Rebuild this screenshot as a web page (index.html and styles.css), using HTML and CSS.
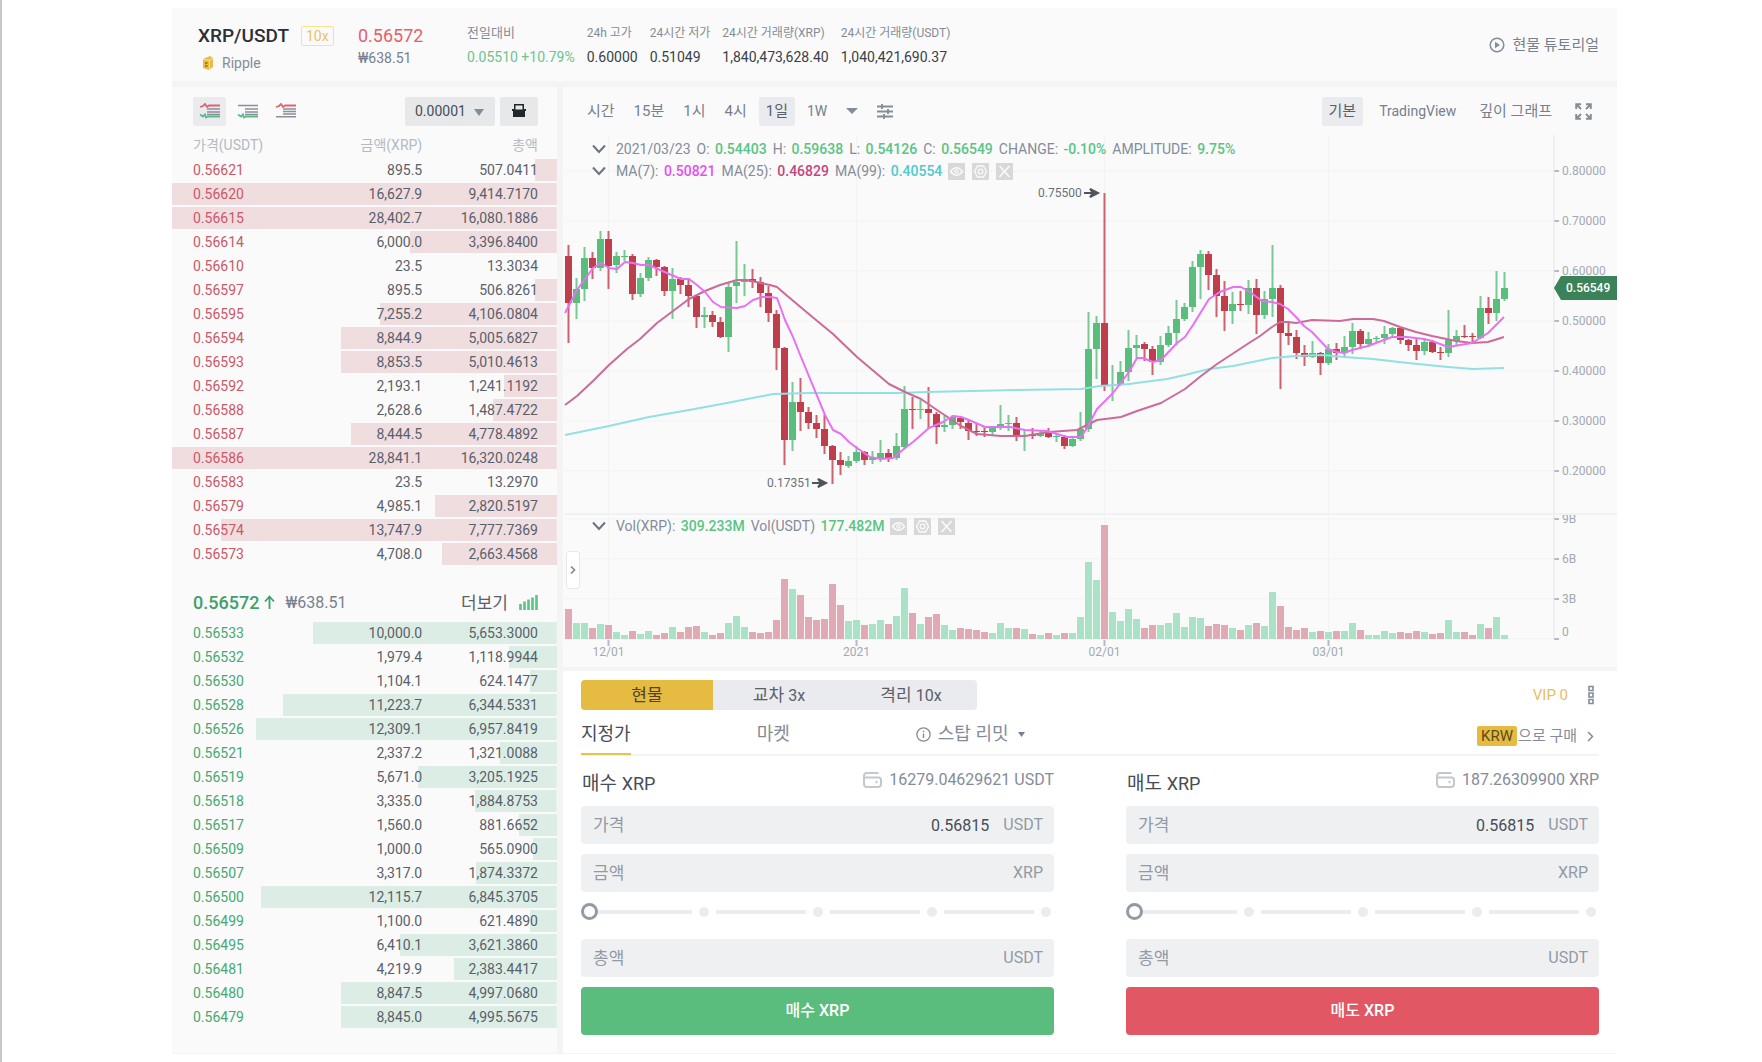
FILE: index.html
```html
<!DOCTYPE html>
<html lang="ko">
<head>
  <meta charset="UTF-8">
  <meta name="viewport" content="width=device-width">
  <title>XRP/USDT</title>
  <link rel="stylesheet" href="styles.css">
</head>

<body>

<svg class="defs" aria-hidden="true">
  <symbol id="chev" viewBox="0 0 14 10"><path d="M1 1.5l6 6.5 6-6.5" fill="none" stroke="#6b7380" stroke-width="2"/></symbol>
  <symbol id="eye" viewBox="0 0 17 17"><rect width="17" height="17" fill="#d8d8d8"/><path d="M2.500 8.500q6-7.500 12 0q-6 7.500-12 0z" fill="none" stroke="#fafafa" stroke-width="1.400"/><circle cx="8.500" cy="8.500" r="1.600" fill="none" stroke="#fafafa" stroke-width="1.200"/></symbol>
  <symbol id="gear" viewBox="0 0 17 17"><rect width="17" height="17" fill="#d8d8d8"/><path d="M5.500 3h6l3 5.500-3 5.500h-6l-3-5.500z" fill="none" stroke="#fafafa" stroke-width="1.400"/><circle cx="8.500" cy="8.500" r="2.300" fill="none" stroke="#fafafa" stroke-width="1.300"/></symbol>
  <symbol id="cross" viewBox="0 0 17 17"><rect width="17" height="17" fill="#d8d8d8"/><path d="M3.500 3l10 11M13.500 3l-10 11" stroke="#fafafa" stroke-width="1.700"/></symbol>
  <symbol id="wallet" viewBox="0 0 19 16"><path d="M15.500 1H4Q1 1 1 4v8q0 3 3 3h11q3 0 3-3V8q0-2.500-2.500-2.500H1" fill="none" stroke="#c3c8cf" stroke-width="2"/><circle cx="13.500" cy="10" r="1.200" fill="#c3c8cf"/></symbol>
</svg>

<main class="terminal">

  <header class="ticker">
    <div class="pair">
      <div class="pair-top"><h1>XRP/USDT</h1><span class="lever">10x</span></div>
      <div class="coin">
        <svg width="12" height="14" viewBox="0 0 12 14"><path d="M1 3l7-3 3 2v9l-4 3-6-2z" fill="#e8bb45"/><path d="M7.500 4v9.500M1.500 3.500l6 .8 3.500-2" stroke="#f8e3a5" fill="none"/><path d="M3 6h2.500v2H3zM3 9h2.500v2H3z" fill="#a87d1c"/></svg>
        <a href="#ripple">Ripple</a>
      </div>
    </div>
    <div class="last">
      <div class="last-price">0.56572</div>
      <div class="last-krw">₩638.51</div>
    </div>
    <dl class="stats">
      <div><dt class="big">전일대비</dt><dd class="up">0.05510 +10.79%</dd></div>
      <div><dt>24h 고가</dt><dd>0.60000</dd></div>
      <div><dt>24시간 저가</dt><dd>0.51049</dd></div>
      <div><dt>24시간 거래량(XRP)</dt><dd>1,840,473,628.40</dd></div>
      <div><dt>24시간 거래량(USDT)</dt><dd>1,040,421,690.37</dd></div>
    </dl>
    <a class="tutorial" href="#tutorial">
      <svg width="16" height="16" viewBox="0 0 16 16"><circle cx="8" cy="8" r="6.800" fill="none" stroke="#848c99" stroke-width="1.500"/><path d="M6 4.800l5 3.200-5 3.200z" fill="#848c99"/></svg>
      현물 튜토리얼
    </a>
  </header>

  <section class="book">
    <div class="book-tools">
      <button class="view active" aria-label="전체">
        <svg width="22" height="16" viewBox="0 0 22 16"><path d="M8 6h13M8 9h13M8 11.500h13" stroke="#8b8f96" stroke-width="1.500"/><path d="M1 4l3-1 2-2 2 3 2-1.500h11" stroke="#e06470" stroke-width="1.800" fill="none"/><path d="M1 11.500l3 2 2-2 1 3 2-1h12" stroke="#59bd8a" stroke-width="1.800" fill="none"/></svg>
      </button>
      <button class="view" aria-label="매수">
        <svg width="22" height="16" viewBox="0 0 22 16"><path d="M1 2.500h20M8 6h13M8 9h13M8 11.500h13" stroke="#8b8f96" stroke-width="1.500"/><path d="M1 11.500l3 2 2-2 1 3 2-1h12" stroke="#59bd8a" stroke-width="1.800" fill="none"/></svg>
      </button>
      <button class="view" aria-label="매도">
        <svg width="22" height="16" viewBox="0 0 22 16"><path d="M8 6h13M8 8.500h13M8 11h13M1 13.700h20" stroke="#8b8f96" stroke-width="1.500"/><path d="M1 4l3-1 2-2 2 3 2-1.500h11" stroke="#e06470" stroke-width="1.800" fill="none"/></svg>
      </button>
      <span class="step"><select aria-label="단위"><option>0.00001</option></select></span>
      <button class="tray" aria-label="인쇄">
        <svg width="14" height="14" viewBox="0 0 14 14"><path d="M2 0h10v5h2v2h-1v6H1V7H0V5h2z" fill="#23262b"/><path d="M3.500 1.500h7v4h-7z" fill="#e6e8ea"/></svg>
      </button>
    </div>
    <table class="orders asks">
      <thead><tr><th>가격(USDT)</th><th>금액(XRP)</th><th>총액</th></tr></thead>
      <tbody id="asks"></tbody>
    </table>
    <div class="spread">
      <strong>0.56572</strong>
      <svg width="11" height="15" viewBox="0 0 11 15"><path d="M5.500 14V2M1 6.500l4.500-5 4.500 5" fill="none" stroke="#3fa06c" stroke-width="1.800"/></svg>
      <span class="spread-krw">₩638.51</span>
      <a href="#more">더보기</a>
      <svg width="19" height="15" viewBox="0 0 19 15"><path d="M1.500 15V9M5.500 15V6.500M9.500 15V4.500M13.500 15V2.500M17.500 15V0" stroke="#5bc487" stroke-width="2.600"/></svg>
    </div>
    <table class="orders bids">
      <tbody id="bids"></tbody>
    </table>
  </section>

  <section class="chart">
    <div class="chart-tools">
      <div class="tools">
        <button>시간</button>
        <button>15분</button>
        <button>1시</button>
        <button>4시</button>
        <button class="active">1일</button>
        <button class="latin">1W</button>
        <button aria-label="더 많은 간격"><svg width="12" height="6" viewBox="0 0 12 6"><path d="M0 0h12L6 6z" fill="#848c99"/></svg></button>
        <button aria-label="지표"><svg width="16" height="15" viewBox="0 0 16 15"><path d="M0 2.500h16M0 7.500h16M0 12.500h16M5 0v5M11 5v5M7 10v5" stroke="#848c99" stroke-width="1.800"/></svg></button>
      </div>
      <div class="tools wide">
        <button class="active">기본</button>
        <button class="latin">TradingView</button>
        <button>깊이 그래프</button>
        <button aria-label="전체 화면"><svg width="17" height="17" viewBox="0 0 17 17"><path d="M1.200 6V1.200H6M1.500 1.500L6 6M11 1.200h4.800V6M15.500 1.500L11 6M1.200 11v4.800H6M1.500 15.500L6 11M11 15.800h4.800V11M15.500 15.500L11 11" fill="none" stroke="#848c99" stroke-width="1.900"/></svg></button>
      </div>
    </div>
    <div class="plot">
      <svg id="candles" viewBox="0 0 1054 532" role="img" aria-label="XRP/USDT 1일"></svg>
      <div class="legends">
        <p class="legend"><svg width="14" height="10"><use href="#chev"/></svg><span>2021/03/23</span><span>O: <b>0.54403</b></span><span>H: <b>0.59638</b></span><span>L: <b>0.54126</b></span><span>C: <b>0.56549</b></span><span>CHANGE: <b>-0.10%</b></span><span>AMPLITUDE: <b>9.75%</b></span></p>
        <p class="legend"><svg width="14" height="10"><use href="#chev"/></svg><span>MA(7): <b class="ma7">0.50821</b></span><span>MA(25): <b class="ma25">0.46829</b></span><span>MA(99): <b class="ma99">0.40554</b></span><svg class="tool" width="17" height="17"><use href="#eye"/></svg><svg class="tool" width="17" height="17"><use href="#gear"/></svg><svg class="tool" width="17" height="17"><use href="#cross"/></svg></p>
      </div>
      <div class="legends volume">
        <p class="legend"><svg width="14" height="10"><use href="#chev"/></svg><span>Vol(XRP): <b>309.233M</b></span><span>Vol(USDT) <b>177.482M</b></span><svg class="tool" width="17" height="17"><use href="#eye"/></svg><svg class="tool" width="17" height="17"><use href="#gear"/></svg><svg class="tool" width="17" height="17"><use href="#cross"/></svg></p>
      </div>
      <button class="handle" aria-label="펼치기"><svg width="6" height="8" viewBox="0 0 6 8"><path d="M1 .5L4.500 4 1 7.500" fill="none" stroke="#848c99" stroke-width="1.700"/></svg></button>
    </div>
  </section>

  <section class="trade">
    <div class="trade-top">
      <div class="modes">
        <button class="active">현물</button>
        <button>교차 <small>3x</small></button>
        <button>격리 <small>10x</small></button>
      </div>
      <a class="vip" href="#vip">VIP 0</a>
      <button class="dots" aria-label="메뉴"><svg width="6" height="20" viewBox="0 0 6 20"><path d="M1 1.500h4v4H1zM1 8h4v4H1zM1 14.500h4v4H1z" fill="none" stroke="#848c99" stroke-width="1.600"/></svg></button>
    </div>
    <div class="types">
      <button class="active">지정가</button>
      <button>마켓</button>
      <button>
        <svg width="15" height="15" viewBox="0 0 15 15"><circle cx="7.500" cy="7.500" r="6.600" fill="none" stroke="#848c99" stroke-width="1.300"/><path d="M7.500 6.500v4.500M7.500 3.700v1.600" stroke="#848c99" stroke-width="1.400"/></svg>
        스탑 리밋
        <svg class="caret" width="7" height="5" viewBox="0 0 7 5"><path d="M0 0h7L3.500 5z" fill="#76808f"/></svg>
      </button>
      <a class="krw" href="#buy"><mark>KRW</mark>으로 구매<svg width="7" height="11" viewBox="0 0 7 11"><path d="M1 1l4.500 4.500L1 10" fill="none" stroke="#848c99" stroke-width="1.500"/></svg></a>
    </div>
    <div class="forms">
      <form class="order buy">
        <div class="order-head"><h2>매수 <small>XRP</small></h2><span class="balance"><svg width="19" height="16"><use href="#wallet"/></svg>16279.04629621 USDT</span></div>
        <div class="field"><label for="buy-price">가격</label><input id="buy-price" type="text" value="0.56815"><span>USDT</span></div>
        <div class="field"><label for="buy-amount">금액</label><input id="buy-amount" type="text"><span>XRP</span></div>
        <div class="slider"><i class="bar"></i><i class="dot"></i><i class="bar"></i><i class="dot"></i><i class="bar"></i><i class="dot"></i><i class="bar"></i><i class="dot"></i><input type="range" min="0" max="100" value="0" aria-label="매수 비율"></div>
        <div class="field"><label for="buy-total">총액</label><input id="buy-total" type="text"><span>USDT</span></div>
        <button type="button">매수 XRP</button>
      </form>
      <form class="order sell">
        <div class="order-head"><h2>매도 <small>XRP</small></h2><span class="balance"><svg width="19" height="16"><use href="#wallet"/></svg>187.26309900 XRP</span></div>
        <div class="field"><label for="sell-price">가격</label><input id="sell-price" type="text" value="0.56815"><span>USDT</span></div>
        <div class="field"><label for="sell-amount">금액</label><input id="sell-amount" type="text"><span>XRP</span></div>
        <div class="slider"><i class="bar"></i><i class="dot"></i><i class="bar"></i><i class="dot"></i><i class="bar"></i><i class="dot"></i><i class="bar"></i><i class="dot"></i><input type="range" min="0" max="100" value="0" aria-label="매도 비율"></div>
        <div class="field"><label for="sell-total">총액</label><input id="sell-total" type="text"><span>USDT</span></div>
        <button type="button">매도 XRP</button>
      </form>
    </div>
  </section>

</main>

<script src="script.js"></script>
</body>
</html>
```

FILE: styles.css
```css
* {
    box-sizing: border-box;
}
body {
    margin: 0;
    padding: 8px 145px 8px 170px;
    border-left: 2px solid #c8c8c8;
    background: #fff;
    color: #5a6069;
    font-family: Roboto, "Noto Sans CJK KR", sans-serif;
    font-size: 14px;
    line-height: 20px;
}
h1, h2, p, dl, dd {
    margin: 0;
}
a {
    color: inherit;
    text-decoration: none;
}
button, input, select {
    margin: 0;
    padding: 0;
    border: 0;
    background: none;
    color: inherit;
    font: inherit;
}
svg {
    display: block;
    flex: none;
}
.defs {
    position: absolute;
    width: 0;
    height: 0;
}
.terminal {
    display: grid;
    grid-template-columns: 385px 1fr;
    grid-template-rows: auto auto 1fr;
    column-gap: 6px;
    background: #f4f4f4;
    border-bottom: 1px solid #f4f4f4;
}

/* ticker */
.ticker {
    grid-column: 1 / -1;
    display: flex;
    margin-bottom: 6px;
    padding: 14px 18px 6px 26px;
    height: 73px;
    background: #fafafa;
}
.pair {
    width: 160px;
}
.pair-top {
    display: flex;
    align-items: center;
    gap: 12px;
    height: 28px;
}
h1 {
    font-size: 19px;
    font-weight: 500;
    color: #2b2f36;
}
.lever {
    padding: 0 4px;
    border: 1px solid #f9e48c;
    border-radius: 2px;
    line-height: 18px;
    color: #e9c169;
}
.coin {
    display: flex;
    align-items: center;
    gap: 8px;
    padding: 3px 4px;
    color: #848c99;
}
.last {
    width: 109px;
}
.last-price {
    font-size: 18px;
    line-height: 28px;
    color: #e5606c;
}
.last-krw {
    line-height: 16px;
    color: #76808f;
}
.stats {
    display: flex;
    gap: 12px;
}
.stats dt {
    height: 25px;
    font-size: 12px;
    line-height: 22px;
    color: #848c99;
}
.stats dt.big {
    font-size: 13px;
}
.stats dd {
    line-height: 20px;
    color: #3b3f46;
}
.stats .up {
    color: #6cc48f;
}
.tutorial {
    display: flex;
    align-items: center;
    gap: 7px;
    height: 46px;
    margin-left: auto;
    font-size: 15px;
    color: #76808f;
}

/* order book */
.book {
    grid-row: 2 / 4;
    background: #fafafa;
}
.book-tools {
    display: flex;
    align-items: center;
    gap: 5px;
    height: 48px;
    padding: 0 19px 0 21px;
}
.view {
    display: grid;
    place-items: center;
    width: 33px;
    height: 29px;
    border-radius: 2px;
}
.view.active {
    background: #eaebef;
}
.step {
    position: relative;
    margin-left: auto;
}
.step::after {
    content: "";
    position: absolute;
    right: 11px;
    top: 12px;
    border: 5px solid transparent;
    border-top: 7px solid #848c99;
    border-bottom: 0;
    pointer-events: none;
}
.step select {
    display: block;
    appearance: none;
    width: 90px;
    height: 29px;
    padding-left: 10px;
    border-radius: 2px;
    background: #e6e8ea;
    color: #474d57;
}
.tray {
    display: grid;
    place-items: center;
    width: 38px;
    height: 29px;
    border-radius: 2px;
    background: #e6e8ea;
}
.orders {
    width: 100%;
    table-layout: fixed;
    border-collapse: collapse;
}
.orders th, .orders td {
    padding: 0;
    text-align: right;
    font-weight: 400;
}
.orders th {
    height: 24px;
    padding-bottom: 4px;
    line-height: 18px;
    color: #b4bac3;
}
.orders tr > :first-child {
    width: 31%;
    padding-left: 21px;
    text-align: left;
}
.orders tr > :nth-child(2) {
    width: 34%;
}
.orders tr > :last-child {
    padding-right: 19px;
}
.orders td {
    height: 24px;
    padding-bottom: 2px;
    line-height: 22px;
}
.orders tbody tr {
    background-repeat: no-repeat;
    background-position: right top;
    background-size: var(--depth) 22px;
}
.asks tbody tr {
    background-image: linear-gradient(#f0dde0, #f0dde0);
}
.bids tbody tr {
    background-image: linear-gradient(#dcede5, #dcede5);
}
.asks td:first-child {
    color: #cd5766;
}
.bids td:first-child {
    color: #45a974;
}
.spread {
    display: flex;
    align-items: center;
    gap: 5px;
    height: 55px;
    padding: 16px 19px 0 21px;
    font-size: 16px;
    color: #76808f;
}
.spread strong {
    font-size: 18px;
    font-weight: 500;
    color: #3fa06c;
}
.spread-krw {
    margin: 0 auto 0 5px;
}
.spread a {
    margin-right: 6px;
    font-size: 17px;
    color: #5a6069;
}

/* chart */
.chart {
    margin-bottom: 4px;
    background: #fafafa;
}
.chart-tools {
    display: flex;
    align-items: center;
    justify-content: space-between;
    height: 48px;
    padding: 0 18px 0 17px;
}
.tools {
    display: flex;
    gap: 5px;
}
.tools.wide {
    gap: 9px;
}
.chart-tools button {
    height: 29px;
    padding: 0 7px;
    border-radius: 2px;
    font-size: 15px;
    color: #76808f;
}
.chart-tools .latin {
    font-size: 14px;
}
.chart-tools .active {
    background: #eaebef;
    color: #5a6069;
}
.plot {
    position: relative;
}
.plot > svg {
    width: 100%;
    height: auto;
}
.legends {
    position: absolute;
    top: 3px;
    left: 29px;
}
.legends.volume {
    top: 380px;
}
.legend {
    display: flex;
    align-items: center;
    gap: 6px;
    height: 22px;
    white-space: nowrap;
    color: #848c99;
}
.legend svg:first-child {
    margin-right: 4px;
}
.legend b {
    margin-left: 2px;
    font-weight: 500;
    color: #59c484;
}
.legend .ma7 {
    color: #e84ff0;
}
.legend .ma25 {
    color: #c4457f;
}
.legend .ma99 {
    color: #4fc9cf;
}
.legend .tool + .tool {
    margin-left: 1px;
}
.handle {
    position: absolute;
    top: 416px;
    left: 3px;
    display: grid;
    place-items: center;
    width: 14px;
    height: 38px;
    border: 1px solid #e6e8ea;
    border-radius: 3px;
    background: #fff;
}
.grid {
    stroke: #f3f3f3;
}
.axis {
    stroke: #e2e5e8;
}
.split {
    stroke: #eff1f3;
    stroke-width: 2;
}
.tick {
    stroke: #b4bac3;
    stroke-width: 2;
}
.axis-text {
    font-size: 12px;
    fill: #a3a9b3;
}
.mid {
    text-anchor: middle;
}
.mark {
    font-size: 12px;
    fill: #6b7078;
}
.arrow {
    fill: #50555d;
    stroke: #50555d;
    stroke-width: 2;
}
.tag {
    fill: #3b8259;
}
.tag-text {
    font-size: 12px;
    font-weight: 500;
    fill: #fff;
}
.rise {
    fill: #59bd7c;
    stroke: #59bd7c;
}
.fall {
    fill: #bf3e4c;
    stroke: #bf3e4c;
}
.wick {
    stroke-width: 2;
    opacity: .8;
}
.body {
    stroke: none;
}
.vol {
    stroke: none;
}
.vol.rise {
    fill: #a9e2c5;
}
.vol.fall {
    fill: #dfaab3;
}
.line {
    fill: none;
    stroke-width: 2;
    stroke-linejoin: round;
}
.line.ma7 {
    stroke: #e771f2;
}
.line.ma25 {
    stroke: #cc6a9a;
}
.line.ma99 {
    stroke: #93e0e2;
}

/* trade */
.trade {
    padding: 9px 18px 18px;
    background: #fff;
    font-size: 17px;
}
.trade-top {
    display: flex;
    align-items: center;
}
.modes {
    display: flex;
    width: 396px;
    border-radius: 4px;
    background: #eaebef;
    overflow: hidden;
}
.modes button {
    flex: 1;
    height: 30px;
    line-height: 26px;
    color: #5a6069;
}
.modes .active {
    background: #e5bb41;
    color: #4d431f;
}
small {
    font-size: inherit;
}
.modes small {
    font-size: 16px;
}
.vip {
    margin-left: auto;
    font-size: 15px;
    color: #e9bd5a;
}
.dots {
    margin: 0 5px 0 20px;
}
.types {
    display: flex;
    align-items: center;
    height: 46px;
    margin-bottom: 14px;
    border-bottom: 2px solid #f2f3f4;
    font-size: 18px;
    color: #848c99;
}
.types button {
    display: flex;
    align-items: center;
    gap: 7px;
    height: 46px;
    margin-right: 126px;
    padding-top: 6px;
    border-bottom: 2px solid transparent;
}
.types .active {
    border-color: #e9c14e;
    color: #474d57;
}
.types .caret {
    margin-left: 2px;
}
.krw {
    display: flex;
    align-items: center;
    margin-left: auto;
    padding: 8px 5px 0 0;
    font-size: 15px;
}
.krw mark {
    margin-right: 1px;
    padding: 0 4px;
    border-radius: 2px;
    background: #e5bb41;
    color: #5b4d1c;
}
.krw svg {
    margin-left: 10px;
}
.forms {
    display: grid;
    grid-template-columns: 1fr 1fr;
    gap: 72px;
}
.order {
    display: flex;
    flex-direction: column;
}
.order-head {
    display: flex;
    justify-content: space-between;
    height: 36px;
}
h2 {
    padding-left: 1px;
    font-size: 19px;
    font-weight: 400;
    line-height: 28px;
    color: #474d57;
}
h2 small {
    font-size: 18px;
}
.balance {
    display: flex;
    gap: 7px;
    height: 20px;
    align-items: center;
    font-size: 16px;
    color: #848c99;
}
.field {
    display: flex;
    align-items: center;
    height: 38px;
    padding: 0 11px 0 12px;
    border-radius: 4px;
    background: #eff0f2;
    color: #929aa5;
}
.field + .field {
    margin-top: 10px;
}
.field input {
    flex: 1;
    min-width: 0;
    height: 38px;
    padding-right: 14px;
    font-size: 16px;
    text-align: right;
    color: #474d57;
}
.field span {
    font-size: 16px;
}
.slider {
    position: relative;
    display: flex;
    align-items: center;
    gap: 7px;
    height: 47px;
    padding: 0 3px 8px 9px;
}
.slider .bar {
    flex: 1 0 0;
    height: 4px;
    background: #eaecef;
}
.slider .bar:first-child {
    flex-basis: 12px;
}
.slider .dot {
    width: 10px;
    height: 10px;
    border-radius: 5px;
    background: #eaecef;
}
.slider input {
    position: absolute;
    inset: 0 0 8px;
    width: 100%;
    appearance: none;
}
.slider input::-webkit-slider-thumb {
    appearance: none;
    width: 17px;
    height: 17px;
    border: 3px solid #929aa5;
    border-radius: 50%;
    background: #fff;
}
.order > button {
    height: 48px;
    margin-top: 10px;
    border-radius: 4px;
    font-size: 16px;
    font-weight: 500;
    color: #fff;
}
.buy > button {
    background: #5bbd7d;
}
.sell > button {
    background: #e15763;
}
```

FILE: script.js
```js
"use strict";
const ASKS = [
    ["0.56621", "895.5", "507.0411"], ["0.56620", "16,627.9", "9,414.7170"],
    ["0.56615", "28,402.7", "16,080.1886"], ["0.56614", "6,000.0", "3,396.8400"],
    ["0.56610", "23.5", "13.3034"], ["0.56597", "895.5", "506.8261"],
    ["0.56595", "7,255.2", "4,106.0804"], ["0.56594", "8,844.9", "5,005.6827"],
    ["0.56593", "8,853.5", "5,010.4613"], ["0.56592", "2,193.1", "1,241.1192"],
    ["0.56588", "2,628.6", "1,487.4722"], ["0.56587", "8,444.5", "4,778.4892"],
    ["0.56586", "28,841.1", "16,320.0248"], ["0.56583", "23.5", "13.2970"],
    ["0.56579", "4,985.1", "2,820.5197"], ["0.56574", "13,747.9", "7,777.7369"],
    ["0.56573", "4,708.0", "2,663.4568"]
]
const BIDS = [
    ["0.56533", "10,000.0", "5,653.3000"], ["0.56532", "1,979.4", "1,118.9944"],
    ["0.56530", "1,104.1", "624.1477"], ["0.56528", "11,223.7", "6,344.5331"],
    ["0.56526", "12,309.1", "6,957.8419"], ["0.56521", "2,337.2", "1,321.0088"],
    ["0.56519", "5,671.0", "3,205.1925"], ["0.56518", "3,335.0", "1,884.8753"],
    ["0.56517", "1,560.0", "881.6652"], ["0.56509", "1,000.0", "565.0900"],
    ["0.56507", "3,317.0", "1,874.3372"], ["0.56500", "12,115.7", "6,845.3705"],
    ["0.56499", "1,100.0", "621.4890"], ["0.56495", "6,410.1", "3,621.3860"],
    ["0.56481", "4,219.9", "2,383.4417"], ["0.56480", "8,847.5", "4,997.0680"],
    ["0.56479", "8,845.0", "4,995.5675"]
]
const FULL = 15750 //amount that fills the row

function fill(body, orders) {
    for (let o of orders) {
        let amount = Number(o[1].replace(",", ""))
        let depth = Math.min(100, 100*amount/FULL).toFixed(1)
        body.innerHTML += `<tr style="--depth:${depth}%"><td>${o.join("</td><td>")}</td></tr>`
    }
}
fill(document.getElementById("asks"), ASKS)
fill(document.getElementById("bids"), BIDS)

//rise?, wick top, body top, body bottom, wick bottom, volume
const DAYS = [
    [0,110,121,168,208,30],[1,143,154,168,184,16],[1,112,123,154,166,16],[0,117,123,133,144,11],
    [1,96,104,133,136,15],[0,96,104,131,154,14],[1,117,121,130,138,7],[1,115,121,122,126,4],
    [0,119,121,159,165,8],[1,138,143,159,162,5],[1,122,125,143,146,8],[0,124,125,132,141,4],
    [0,131,132,156,161,6],[1,133,144,156,184,12],[0,142,144,150,159,7],[0,143,150,161,172,12],
    [0,160,161,182,193,13],[1,172,180,182,193,7],[0,176,180,187,192,4],[0,182,187,202,203,6],
    [1,148,152,202,217,16],[1,106,147,151,168,23],[1,129,144,147,161,12],[0,134,144,147,153,7],
    [0,142,147,158,172,6],[0,151,158,178,187,7],[0,175,179,213,235,19],[0,212,213,305,330,60],
    [1,247,267,305,316,50],[0,243,267,277,296,44],[0,272,277,288,294,22],[0,280,288,294,303,19],
    [0,280,294,311,319,20],[0,310,311,325,349,55],[0,317,325,330,340,34],[1,321,326,331,333,18],
    [1,311,317,326,328,19],[0,316,317,325,330,14],[1,316,323,325,329,15],[1,305,318,323,327,19],
    [0,314,318,323,327,15],[1,298,311,323,325,23],[1,251,274,312,314,51],[0,262,274,275,294,26],
    [1,265,274,275,284,15],[0,252,274,278,294,22],[0,277,279,292,309,25],[1,281,290,292,297,14],
    [1,280,282,290,294,9],[0,281,283,287,294,11],[0,284,288,296,305,10],[0,288,296,297,301,9],
    [0,292,296,297,302,7],[1,291,293,297,301,6],[1,270,289,293,295,16],[1,280,288,289,296,11],
    [0,282,288,301,306,11],[1,295,300,301,316,10],[0,293,299,301,304,5],[1,295,299,301,302,4],
    [0,293,297,302,303,6],[1,298,301,302,307,4],[0,300,302,311,314,6],[1,301,304,311,312,6],
    [1,277,294,304,306,22],[1,177,214,294,297,77],[1,181,188,214,244,59],[0,58,188,251,256,114],
    [1,230,250,251,266,27],[1,226,237,250,251,18],[1,195,213,237,246,30],[1,200,210,213,223,20],
    [0,207,209,214,226,11],[0,211,214,227,240,14],[1,201,210,227,230,14],[1,191,198,210,212,16],
    [1,165,184,198,210,26],[1,168,172,184,186,12],[1,126,132,172,177,22],[1,115,119,132,164,21],
    [0,116,119,140,155,13],[0,134,140,161,182,15],[0,146,161,176,196,14],[1,157,169,176,189,11],
    [0,156,169,170,176,9],[1,145,153,170,179,14],[0,144,153,180,199,16],[1,156,164,180,184,13],
    [1,110,153,164,182,47],[0,150,153,198,254,33],[0,186,198,201,210,12],[0,195,202,218,224,9],
    [0,210,218,222,231,11],[1,206,218,222,223,7],[0,217,218,228,240,8],[1,209,214,228,230,7],
    [0,208,214,218,225,8],[1,201,212,218,222,8],[1,188,196,212,219,16],[0,194,196,209,214,9],
    [1,197,204,209,212,4],[1,201,203,204,208,4],[1,191,199,203,209,8],[1,192,193,199,202,6],
    [0,192,193,205,209,7],[0,204,205,210,216,6],[0,204,210,216,225,8],[1,203,207,216,220,7],
    [0,205,207,217,218,5],[0,212,217,218,225,6],[1,175,205,218,222,19],[1,195,201,206,210,7],
    [0,190,201,202,203,7],[0,198,201,202,208,4],[1,161,173,203,204,15],[0,162,173,178,189,11],
    [1,136,164,178,186,22],[1,137,153,164,166,4]
]
const MA = {
    ma99: "2,300 46,291 86,282 126,275 164,268 210,259 247,258 334,258 364,257 454,255 518,254 537,251 566,249 604,244 622,240 646,234 670,231 709,223 733,221 760,220 781,222 810,224 845,228 885,232 910,234 941,233",
    ma25: "2,270 14,261 30,246 46,230 64,214 77,204 94,188 110,176 126,164 142,156 157,150 174,145 184,145 198,148 207,150 214,152 222,159 247,180 270,199 294,222 326,249 342,257 358,264 374,275 398,291 414,299 438,301 462,301 486,297 514,295 534,285 558,282 574,276 598,268 622,254 638,241 654,229 686,208 697,201 709,192 717,187 725,187 733,188 749,185 777,186 790,184 810,184 821,186 837,192 853,197 869,201 893,206 909,208 925,207 941,202",
    ma7: "2,178 14,155 30,133 38,128 46,133 54,134 62,127 70,128 78,130 86,130 97,135 118,144 126,144 134,150 142,157 150,167 158,172 174,173 182,171 190,165 199,162 207,162 214,163 222,185 230,202 238,222 262,280 270,295 278,299 286,307 294,313 307,322 318,324 330,323 342,313 350,307 366,293 380,287 390,281 398,282 406,285 422,292 447,292 462,295 484,296 504,302 518,302 524,293 534,274 550,258 566,237 574,223 580,223 590,227 598,225 614,208 622,202 630,190 646,164 657,157 670,152 678,152 687,157 699,166 709,167 717,169 725,174 733,182 741,191 749,197 765,214 774,217 781,218 789,215 805,211 821,205 829,202 844,202 861,204 869,206 877,209 885,212 897,210 909,208 925,198 941,182"
}
const BASE = 504, AXIS = 991

function line(c, x1, y1, x2, y2) {
    return `<line class="${c}" x1="${x1}" y1="${y1}" x2="${x2}" y2="${y2}"/>`
}
function text(c, x, y, t) {
    return `<text class="${c}" x="${x}" y="${y}">${t}</text>`
}
function draw() {
    let s = ""
    //grid and axes
    for (let i = 0; i < 7; i++) {
        let y = 36 + 50*i
        s += line("grid", 2, y, AXIS, y) + line("tick", AXIS, y, AXIS+5, y)
        s += text("axis-text", AXIS+8, y+4, (0.8 - i/10).toFixed(5))
    }
    for (let [i, t] of ["9B", "6B", "3B", "0"].entries()) {
        let y = 384 + 40*i
        s += line("grid", 2, y, AXIS, y) + line("tick", AXIS, y, AXIS+5, y)
        s += text("axis-text", AXIS+8, t == "0" ? y-3 : y+4, t)
    }
    for (let [i, t] of [[5, "12/01"], [36, "2021"], [67, "02/01"], [95, "03/01"]]) {
        let x = 5.5 + 8*i
        s += line("grid", x, 0, x, BASE) + line("tick", x, BASE+1, x, BASE+7)
        s += text("axis-text mid", x, 521, t)
    }
    s += line("axis", AXIS, 0, AXIS, BASE) + line("split", 2, 379, 1054, 379)
    //candles
    DAYS.forEach(([up, hi, top, bottom, lo, vol], i) => {
        let x = 2 + 8*i, c = up ? "rise" : "fall"
        s += `<rect class="vol ${c}" x="${x}" y="${BASE-vol}" width="7" height="${vol}"/>`
        s += line("wick " + c, x+3.5, hi, x+3.5, lo)
        s += `<rect class="body ${c}" x="${x}" y="${top}" width="7" height="${Math.max(1, bottom-top)}"/>`
    })
    for (let m in MA) s += `<polyline class="line ${m}" points="${MA[m]}"/>`
    //high, low and current price
    s += text("mark", 475, 62, "0.75500") + text("mark", 204, 352, "0.17351")
    for (let [x, y] of [[521, 58], [249, 348]])
        s += `<path class="arrow" d="M${x} ${y}h9l-3-4 8 4-8 4 3-4"/>`
    s += `<path class="tag" d="M${AXIS} 153l7-12h56v24h-56z"/>` + text("tag-text", 1003, 157, "0.56549")
    document.getElementById("candles").innerHTML = s
}
draw()
```
